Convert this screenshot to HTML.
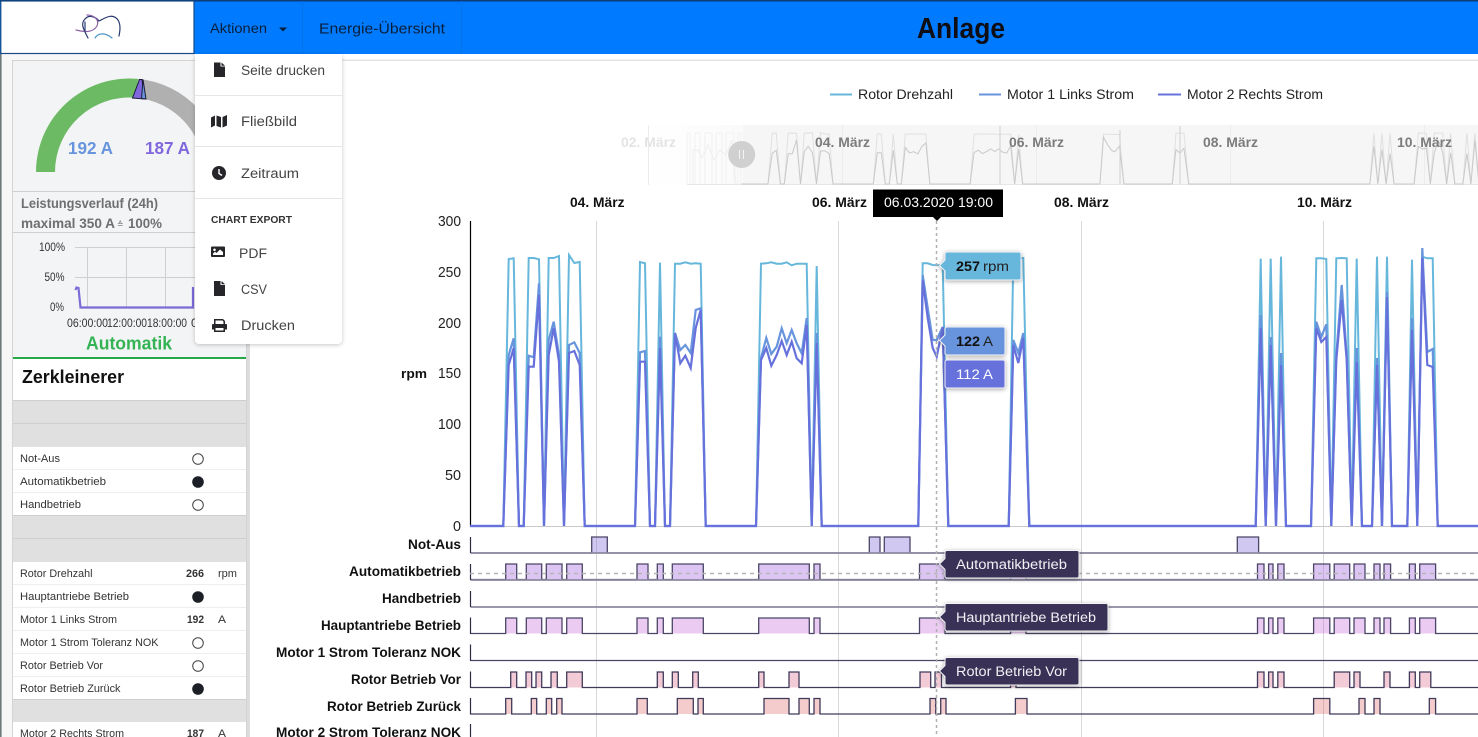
<!DOCTYPE html>
<html lang="de">
<head>
<meta charset="utf-8">
<title>Anlage</title>
<style>
html,body{margin:0;padding:0;width:1478px;height:737px;overflow:hidden;background:#fff}
svg{display:block;position:absolute;left:0;top:0}
text{font-family:"Liberation Sans",sans-serif;white-space:pre}
.s{font-size:11px;fill:#333}
.b{font-weight:bold}
.l{font-size:13.5px;font-weight:bold;fill:#111}
.y{font-size:15px;fill:#222}
.m{font-size:13.5px;fill:#444}
.t{font-size:13.5px;fill:#f2f2f6}
</style>
</head>
<body>
<svg width="1478" height="737" viewBox="0 0 1478 737" xmlns="http://www.w3.org/2000/svg">
<defs>
<path id="r" fill="none" vector-effect="non-scaling-stroke" d="M470 526H503.3L508.7 259 513.7 258.3 519 526H523.7L528.7 258 533.7 258 539 259.3 544 526 548.7 258 553.7 258 559 256 564 526 569 255 574.3 263 579.7 262 584.7 526H635L640 262 645 263.3 650 526H655L660 262.7 665 526H670L675 263.7 680.3 263.7 685.3 262.3 690.7 263.7 695.7 263.3 700.7 263.7 705.7 526H756L761 263.7 766.3 263.3 771.3 262.3 776.7 263.7 781.7 263.7 786.7 262.3 791.7 265.3 796.7 263.7 801.7 263.7 806.7 263.7 811.7 526 816.7 266 821.7 526H918.3L922.7 263.3 927.7 263.3 932.7 265 936.7 265.3 942.7 265 948.3 526H1008.7L1013.3 258 1018.3 258 1023.3 258 1029.3 526H1255.7L1260.7 258.7 1265.7 526 1270.7 258.7 1276 526 1281 256.7 1286 526H1311L1316.3 258.3 1321.3 258.3 1326.3 259 1331.3 526 1336.3 258.3 1341.7 258 1346.7 258.3 1351.7 526 1356.7 258.7 1362 526H1372L1377 256.7 1382 526 1387 256.7 1392 526H1407.3L1412 259.7 1417.3 526 1422.3 256.7 1427.3 258.3 1432.7 258.3 1437.7 526H1478"/>
<path id="a" fill="none" vector-effect="non-scaling-stroke" d="M470 526H503.3L508.7 355 513.7 338.3 519 526H523.7L528.7 355.7 533.7 357.3 539 283.3 544 526 548.7 340 553.7 321.7 559 355 564 526 569 345 574.3 342.3 579.7 353 584.7 526H635L640 352.3 645 351 650 526H655L660 336.7 665 526H670L675 333 680.3 350 685.3 345 690.7 353 695.7 310 700.7 308.3 705.7 526H756L761 358 766.3 338 771.3 354 776.7 346.7 781.7 328.3 786.7 343.3 791.7 330 796.7 343.3 801.7 353.3 806.7 318 811.7 526 816.7 333 821.7 526H918.3L922.7 275 927.7 308 932.7 340 936.7 340 942.7 327 948.3 526H1008.7L1013.3 340 1018.3 353 1023.3 333 1029.3 526H1255.7L1260.7 315 1265.7 526 1270.7 337 1276 526 1281 353 1286 526H1311L1316.3 321.7 1321.3 337 1326.3 324.3 1331.3 526 1336.3 355 1341.7 285 1346.7 355 1351.7 526 1356.7 348 1362 526H1372L1377 358 1382 526 1387 292 1392 526H1407.3L1412 318 1417.3 526 1422.3 248 1427.3 352 1432.7 349 1437.7 526H1478"/>
<path id="c" fill="none" vector-effect="non-scaling-stroke" d="M470 526H503.3L508.7 365 513.7 348 519 526H523.7L528.7 366.7 533.7 366.7 539 295 544 526 548.7 355 553.7 328 559 361.7 564 526 569 353 574.3 351 579.7 365 584.7 526H635L640 361.7 645 361.7 650 526H655L660 348 665 526H670L675 333 680.3 363.3 685.3 355.7 690.7 368 695.7 328 700.7 310 705.7 526H756L761 360 766.3 348 771.3 365.7 776.7 355 781.7 341 786.7 355 791.7 341.7 796.7 358.3 801.7 363.3 806.7 325 811.7 526 816.7 343 821.7 526H918.3L922.7 280 927.7 318 932.7 348 936.7 356.7 942.7 327 948.3 526H1008.7L1013.3 345 1018.3 363 1023.3 338 1029.3 526H1255.7L1260.7 328 1265.7 526 1270.7 345 1276 526 1281 365 1286 526H1311L1316.3 328 1321.3 342 1326.3 337 1331.3 526 1336.3 360 1341.7 300 1346.7 360 1351.7 526 1356.7 362 1362 526H1372L1377 365 1382 526 1387 297 1392 526H1407.3L1412 330 1417.3 526 1422.3 258 1427.3 365 1432.7 367 1437.7 526H1478"/>
<clipPath id="mc"><rect x="648" y="125" width="830" height="60"/></clipPath>
<linearGradient id="fd" x1="0" y1="0" x2="1" y2="0"><stop offset="0" stop-color="#fff"/><stop offset="1" stop-color="#fafafa"/></linearGradient>
</defs>

<!-- page base -->
<rect x="0" y="54" width="1478" height="683" fill="#fff"/>
<rect x="250" y="59.5" width="1228" height="1.5" fill="#e4e4e4"/>

<!-- sidebar -->
<rect x="0" y="54" width="250" height="683" fill="#f7f7f7"/>
<rect x="0" y="54" width="1.6" height="683" fill="#6e7a7a"/>
<rect x="246" y="60" width="4" height="677" fill="#dcdcdc"/>
<rect x="12.5" y="60.5" width="234" height="676.5" fill="#f3f4f6" stroke="#d4d4d4"/>

<!-- gauge -->
<path d="M138 78.9A93.5 93.5 0 0 1 223 172H204A74.5 74.5 0 0 0 136.3 97.8Z" fill="#b0b0b0"/>
<path d="M36 172A93.5 93.5 0 0 1 138 78.9L136.3 97.8A74.5 74.5 0 0 0 55 172Z" fill="#6cba64"/>
<path d="M132.5 98 139.5 79.5 142 79.5 144.5 99Z" fill="#8067dc" stroke="#1c1c3a" stroke-width="1"/>
<path d="M141.5 98.5 143 79.5 146 99Z" fill="#6794dc" stroke="#1c1c3a" stroke-width="1"/>
<text x="68" y="154" font-size="17.5" font-weight="bold" fill="#6794dc" textLength="45" lengthAdjust="spacingAndGlyphs">192 A</text>
<text x="145" y="154" font-size="17.5" font-weight="bold" fill="#8067dc" textLength="45" lengthAdjust="spacingAndGlyphs">187 A</text>

<rect x="13" y="191" width="233" height="1" fill="#cfcfcf"/>
<text x="21" y="208" font-size="14" font-weight="bold" fill="#6f6f6f" textLength="137" lengthAdjust="spacingAndGlyphs">Leistungsverlauf (24h)</text>
<text x="21" y="228" font-size="14" font-weight="bold" fill="#6f6f6f" textLength="94" lengthAdjust="spacingAndGlyphs">maximal 350 A</text>
<text x="117" y="227" font-size="8" fill="#6f6f6f" textLength="6.500" lengthAdjust="spacingAndGlyphs">≙</text>
<text x="128" y="228" font-size="14" font-weight="bold" fill="#6f6f6f" textLength="34" lengthAdjust="spacingAndGlyphs">100%</text>
<rect x="13" y="232" width="233" height="1" fill="#cfcfcf"/>

<!-- small chart -->
<g stroke="#cfcfcf" stroke-width="1">
<path d="M75 247.5H195M75 277.5H195M87.5 247V307M126.5 247V307M165.5 247V307" fill="none"/>
</g>
<path d="M75.5 290 76.5 287.5 78.5 288 80.5 307.5H193V287" fill="none" stroke="#7a6bd6" stroke-width="2.2"/>
<g font-size="12" fill="#333">
<text x="39" y="251" textLength="26" lengthAdjust="spacingAndGlyphs">100%</text>
<text x="44.500" y="281" textLength="20" lengthAdjust="spacingAndGlyphs">50%</text>
<text x="50" y="311" textLength="14" lengthAdjust="spacingAndGlyphs">0%</text>
<text x="67" y="327" textLength="41" lengthAdjust="spacingAndGlyphs">06:00:00</text>
<text x="107" y="327" textLength="40" lengthAdjust="spacingAndGlyphs">12:00:00</text>
<text x="147" y="327" textLength="40" lengthAdjust="spacingAndGlyphs">18:00:00</text>
<text x="191" y="327">0</text>
</g>
<text x="86" y="349.500" font-size="18" font-weight="bold" fill="#34b354" textLength="86" lengthAdjust="spacingAndGlyphs">Automatik</text>
<rect x="13" y="357" width="233" height="2" fill="#28a745"/>

<!-- table panel -->
<rect x="13" y="359" width="233" height="378" fill="#fff"/>
<text x="22" y="383" font-size="18" font-weight="bold" fill="#111" textLength="102" lengthAdjust="spacingAndGlyphs">Zerkleinerer</text>
<g fill="#e0e0e0">
<rect x="13" y="400" width="233" height="47"/>
<rect x="13" y="515" width="233" height="47"/>
<rect x="13" y="699" width="233" height="23"/>
</g>
<path d="M13 400.500H246M13 423.500H246M13 515.500H246M13 538.500H246M13 699.500H246" stroke="#cfcfcf" fill="none"/>
<path d="M13 469.500H246M13 492.500H246M13 584.500H246M13 607.500H246M13 630.500H246M13 653.500H246M13 676.500H246" stroke="#eeeeee" fill="none"/>

<text class="s" x="20" y="462" textLength="40" lengthAdjust="spacingAndGlyphs">Not-Aus</text>
<text class="s" x="20" y="485" textLength="86" lengthAdjust="spacingAndGlyphs">Automatikbetrieb</text>
<text class="s" x="20" y="508" textLength="61" lengthAdjust="spacingAndGlyphs">Handbetrieb</text>
<text class="s" x="20" y="577" textLength="72.500" lengthAdjust="spacingAndGlyphs">Rotor Drehzahl</text>
<text class="s" x="20" y="600" textLength="109" lengthAdjust="spacingAndGlyphs">Hauptantriebe Betrieb</text>
<text class="s" x="20" y="623" textLength="97" lengthAdjust="spacingAndGlyphs">Motor 1 Links Strom</text>
<text class="s" x="20" y="646" textLength="138.500" lengthAdjust="spacingAndGlyphs">Motor 1 Strom Toleranz NOK</text>
<text class="s" x="20" y="669" textLength="83" lengthAdjust="spacingAndGlyphs">Rotor Betrieb Vor</text>
<text class="s" x="20" y="692" textLength="100.500" lengthAdjust="spacingAndGlyphs">Rotor Betrieb Zurück</text>
<text class="s" x="20" y="737" textLength="104" lengthAdjust="spacingAndGlyphs">Motor 2 Rechts Strom</text>

<text class="s b" x="186" y="577" textLength="18" lengthAdjust="spacingAndGlyphs">266</text>
<text class="s" x="218" y="577" textLength="19" lengthAdjust="spacingAndGlyphs">rpm</text>
<text class="s b" x="187" y="623" textLength="17" lengthAdjust="spacingAndGlyphs">192</text>
<text class="s" x="218" y="623" textLength="8" lengthAdjust="spacingAndGlyphs">A</text>
<text class="s b" x="187" y="737" textLength="17" lengthAdjust="spacingAndGlyphs">187</text>
<text class="s" x="218" y="737" textLength="8" lengthAdjust="spacingAndGlyphs">A</text>

<g fill="#fff" stroke="#444" stroke-width="1">
<circle cx="198" cy="459" r="5.300"/>
<circle cx="198" cy="505" r="5.300"/>
<circle cx="198" cy="643" r="5.300"/>
<circle cx="198" cy="666" r="5.300"/>
</g>
<g fill="#1c1f26">
<circle cx="198" cy="482" r="5.800"/>
<circle cx="198" cy="597" r="5.800"/>
<circle cx="198" cy="689" r="5.800"/>
</g>

<!-- legend -->
<g stroke-width="2" fill="none">
<path d="M830 94.500H852" stroke="#67b7dc"/>
<path d="M979 94.500H1001" stroke="#6794dc"/>
<path d="M1158 94.500H1181" stroke="#6771dc"/>
</g>
<g font-size="14" fill="#222">
<text x="858" y="99" textLength="95" lengthAdjust="spacingAndGlyphs">Rotor Drehzahl</text>
<text x="1007" y="99" textLength="127" lengthAdjust="spacingAndGlyphs">Motor 1 Links Strom</text>
<text x="1187" y="99" textLength="136" lengthAdjust="spacingAndGlyphs">Motor 2 Rechts Strom</text>
</g>

<!-- scrollbar / mini chart -->
<rect x="648" y="125" width="95" height="60" fill="url(#fd)"/>
<rect x="743" y="125" width="735" height="60" fill="#f6f6f6"/>
<path d="M648.500 125V185M842.500 125V185M1036.500 125V185M1230.500 125V185M1424.500 125V185" stroke="#ececec" fill="none"/>
<path d="M687 184.500H1478" stroke="#e6e6e6" fill="none"/>
<g clip-path="url(#mc)">
<path d="M687 184V133H690V184M695 184V133H700V184M705 184V133H712V184M716 184V133H722V184M726 184V133H734V184M738 184V133H741V184" fill="none" stroke="#f1f1f1"/>
<path d="M693 184V150H698L702 158 708 145 714 160 720 150 726 155 732 140 736 184" fill="none" stroke="#eeeeee"/>
<g transform="matrix(.8 0 0 .19 365.300 84.060)">
<use href="#r" stroke="#e0e0e0" stroke-width="1"/>
<use href="#c" stroke="#c9c9c9" stroke-width="1"/>
</g>
<path d="M1000 184V126M1120 184V130M1180 184V126" stroke="#d0d0d0" fill="none"/>
</g>
<text x="621" y="147" font-size="13.500" font-weight="bold" fill="#e4e4e4" textLength="55" lengthAdjust="spacingAndGlyphs">02. März</text>
<g font-size="13.500" font-weight="bold" fill="#7c7c7c">
<text x="815" y="147" textLength="55" lengthAdjust="spacingAndGlyphs">04. März</text>
<text x="1009" y="147" textLength="55" lengthAdjust="spacingAndGlyphs">06. März</text>
<text x="1203" y="147" textLength="55" lengthAdjust="spacingAndGlyphs">08. März</text>
<text x="1397" y="147" textLength="55" lengthAdjust="spacingAndGlyphs">10. März</text>
</g>
<circle cx="741.700" cy="154.500" r="13.500" fill="#d0d0d0"/>
<path d="M739.500 150V159M743.500 150V159" stroke="#f4f4f4" stroke-width="1" fill="none"/>

<!-- date labels -->
<g class="l">
<text class="l" x="570" y="207" textLength="54.500" lengthAdjust="spacingAndGlyphs">04. März</text>
<text class="l" x="812" y="207" textLength="55" lengthAdjust="spacingAndGlyphs">06. März</text>
<text class="l" x="1054" y="207" textLength="55" lengthAdjust="spacingAndGlyphs">08. März</text>
<text class="l" x="1297" y="207" textLength="55" lengthAdjust="spacingAndGlyphs">10. März</text>
</g>

<!-- grid -->
<path d="M596.500 221V737M838.500 221V737M1081.500 221V737M1323.500 221V737" stroke="#d8d8d8" fill="none"/>
<path d="M470 526.500H1478" stroke="#c9c9c9" fill="none"/>
<path d="M470.500 221V527" stroke="#000" stroke-width="1.200" fill="none"/>

<!-- y axis -->
<text class="y" x="438" y="226" textLength="23" lengthAdjust="spacingAndGlyphs">300</text>
<text class="y" x="438" y="277" textLength="23" lengthAdjust="spacingAndGlyphs">250</text>
<text class="y" x="438" y="328" textLength="23" lengthAdjust="spacingAndGlyphs">200</text>
<text class="y" x="438" y="378" textLength="23" lengthAdjust="spacingAndGlyphs">150</text>
<text class="y" x="438" y="429" textLength="23" lengthAdjust="spacingAndGlyphs">100</text>
<text class="y" x="445" y="480" textLength="16" lengthAdjust="spacingAndGlyphs">50</text>
<text class="y" x="453" y="531" textLength="8" lengthAdjust="spacingAndGlyphs">0</text>
<text x="401" y="378" font-size="13" font-weight="bold" fill="#111" textLength="26" lengthAdjust="spacingAndGlyphs">rpm</text>

<!-- row labels -->
<text class="l" x="408" y="549" textLength="53" lengthAdjust="spacingAndGlyphs">Not-Aus</text>
<text class="l" x="349" y="576" textLength="112" lengthAdjust="spacingAndGlyphs">Automatikbetrieb</text>
<text class="l" x="382" y="603" textLength="79" lengthAdjust="spacingAndGlyphs">Handbetrieb</text>
<text class="l" x="321" y="630" textLength="140" lengthAdjust="spacingAndGlyphs">Hauptantriebe Betrieb</text>
<text class="l" x="276" y="657" textLength="185" lengthAdjust="spacingAndGlyphs">Motor 1 Strom Toleranz NOK</text>
<text class="l" x="351" y="684" textLength="110" lengthAdjust="spacingAndGlyphs">Rotor Betrieb Vor</text>
<text class="l" x="327" y="711" textLength="134" lengthAdjust="spacingAndGlyphs">Rotor Betrieb Zurück</text>
<text class="l" x="276" y="737" textLength="185" lengthAdjust="spacingAndGlyphs">Motor 2 Strom Toleranz NOK</text>

<!-- main lines -->
<use href="#r" stroke="#67b7dc" stroke-width="2"/>
<use href="#a" stroke="#6794dc" stroke-width="2.200"/>
<use href="#c" stroke="#6771dc" stroke-width="2.200"/>

<!-- step rows -->
<g stroke-width="1.300" stroke-linejoin="miter">
<path stroke="#4b4567" fill="#8067dc" fill-opacity=".36" d="M470.500 553H591.700v-16H607.300v16H869.300v-16H880v16H884.300v-16H910v16H1237.300v-16H1258.600v16H1478"/>
<path stroke="#4b4567" fill="#a367dc" fill-opacity=".38" d="M470.500 579.500H505.700v-15.500H516.700v15.500H526.300v-15.500H541.700v15.500H546.300v-15.500H562v15.500H566.700v-15.500H582.300v15.500H637v-15.500H648v15.500H657.300v-15.500H663.300v15.500H672.300v-15.500H703.300v15.500H758.700v-15.500H809.300v15.500H814v-15.500H820v15.500H919.500v-15.500H945v15.500H1010.600v-15.500H1026v15.500H1257.500v-15.500H1264v15.500H1268.600v-15.500H1273v15.500H1277.800v-15.500H1284v15.500H1313.600v-15.500H1329.800v15.500H1334.200v-15.500H1349.700v15.500H1354v-15.500H1365v15.500H1374v-15.500H1380v15.500H1384v-15.500H1390.600v15.500H1409.400v-15.500H1415.300v15.500H1419.700v-15.500H1435.600v15.500H1478"/>
<path stroke="#4b4567" fill="#c767dc" fill-opacity=".34" d="M470.500 633.500H505.700v-15.500H516.700v15.500H526.300v-15.500H541.700v15.500H546.300v-15.500H562v15.500H566.700v-15.500H582.300v15.500H637v-15.500H648v15.500H657.300v-15.500H663.300v15.500H672.300v-15.500H703.300v15.500H758.700v-15.500H809.300v15.500H814v-15.500H820v15.500H919.500v-15.500H945v15.500H1010.600v-15.500H1026v15.500H1257.500v-15.500H1264v15.500H1268.600v-15.500H1273v15.500H1277.800v-15.500H1284v15.500H1313.600v-15.500H1329.800v15.500H1334.200v-15.500H1349.700v15.500H1354v-15.500H1365v15.500H1374v-15.500H1380v15.500H1384v-15.500H1390.600v15.500H1409.400v-15.500H1415.300v15.500H1419.700v-15.500H1435.600v15.500H1478"/>
<path stroke="#3f3a5a" fill="#dc6788" fill-opacity=".34" d="M470.500 687.500H510.700v-15.500H516.700v15.500H526v-15.500H531.700v15.500H536v-15.500H541.700v15.500H551v-15.500H557.300v15.500H566.700v-15.500H582.300v15.500H657.300v-15.500H663.300v15.500H672.300v-15.500H678.300v15.500H692.700v-15.500H698.300v15.500H758.700v-15.500H764v15.500H789v-15.500H799v15.500H920v-15.500H930.700v15.500H935v-15.500H941.500v15.500H1010.600v-15.500H1016v15.500H1257.500v-15.500H1264v15.500H1268.600v-15.500H1273v15.500H1277.800v-15.500H1284v15.500H1334.200v-15.500H1349.700v15.500H1354v-15.500H1360v15.500H1384v-15.500H1390v15.500H1409.400v-15.500H1415.300v15.500H1419.700v-15.500H1430.800v15.500H1478"/>
<path stroke="#3f3a5a" fill="#dc6967" fill-opacity=".34" d="M470.500 714H505.700v-15.500H511.700v15.500H531.300v-15.500H536.700v15.500H546.300v-15.500H551.700v15.500H556.700v-15.500H562v15.500H637v-15.500H647.300v15.500H677.300v-15.500H693.300v15.500H698v-15.500H703.300v15.500H764v-15.500H789v15.500H799v-15.500H809.300v15.500H814v-15.500H820v15.500H930v-15.500H935.700v15.500H940.700v-15.500H946v15.500H1015.400v-15.500H1027v15.500H1313.600v-15.500H1329.800v15.500H1359v-15.500H1365v15.500H1374v-15.500H1380v15.500H1429.300v-15.500H1435.600v15.500H1478"/>
<path stroke="#8c899f" fill="none" stroke-width="1.800" d="M470.500 553H1478M470.500 580H1478M470.500 607H1478"/>
<path stroke="#4b4567" fill="none" d="M470.500 660.500H1478"/>
<path stroke="#2c2c44" fill="none" stroke-width="1.200" d="M470.500 537V553M470.500 564V580M470.500 591V607M470.500 617.500V634M470.500 644.500V661M470.500 671.500V688M470.500 698V714.500M470.500 724V737"/>
</g>

<!-- cursor -->
<path d="M936.500 221V737" stroke="#b0b0b0" stroke-width="1.500" stroke-dasharray="3 3" fill="none"/>
<path d="M470 573.500H1478" stroke="#b5b5b5" stroke-width="1.500" stroke-dasharray="4 4" fill="none"/>

<!-- black date tooltip -->
<path d="M873 189.500H1003V217H941L937 221 933 217H873Z" fill="#000"/>
<text x="884" y="207" font-size="13.500" fill="#fff" textLength="109" lengthAdjust="spacingAndGlyphs">06.03.2020 19:00</text>

<!-- coloured value tooltips -->
<g stroke="#f4f4f8" stroke-width="1" style="filter:drop-shadow(0 1px 2px rgba(0,0,0,.35))">
<path fill="#67b7dc" d="M947 252H1019a2 2 0 0 1 2 2V278a2 2 0 0 1-2 2H947a2 2 0 0 1-2-2V271L939.500 265.500 945 260V254a2 2 0 0 1 2-2Z"/>
<path fill="#6794dc" d="M947 327H1003a2 2 0 0 1 2 2V353a2 2 0 0 1-2 2H947a2 2 0 0 1-2-2V346L939.500 340.500 945 335V329a2 2 0 0 1 2-2Z"/>
<path fill="#6771dc" d="M947 360H1003a2 2 0 0 1 2 2V386a2 2 0 0 1-2 2H947a2 2 0 0 1-2-2V362a2 2 0 0 1 2-2Z"/>
<path fill="#3a3256" d="M947 550.500H1077a2 2 0 0 1 2 2V576a2 2 0 0 1-2 2H947a2 2 0 0 1-2-2V569.500L939.500 564 945 558.500V552.500a2 2 0 0 1 2-2Z"/>
<path fill="#3a3256" d="M947 603.500H1106a2 2 0 0 1 2 2V629a2 2 0 0 1-2 2H947a2 2 0 0 1-2-2V622.500L939.500 617 945 611.500V605.500a2 2 0 0 1 2-2Z"/>
<path fill="#3a3256" d="M947 657.500H1077a2 2 0 0 1 2 2V683a2 2 0 0 1-2 2H947a2 2 0 0 1-2-2V676.500L939.500 671 945 665.500V659.500a2 2 0 0 1 2-2Z"/>
</g>
<text x="956" y="271" font-size="14" font-weight="bold" fill="#111" textLength="24" lengthAdjust="spacingAndGlyphs">257</text>
<text x="983" y="271" font-size="14" fill="#222" textLength="26" lengthAdjust="spacingAndGlyphs">rpm</text>
<text x="956" y="346" font-size="14" font-weight="bold" fill="#111" textLength="24" lengthAdjust="spacingAndGlyphs">122</text>
<text x="983" y="346" font-size="14" fill="#222" textLength="10" lengthAdjust="spacingAndGlyphs">A</text>
<text x="956" y="379" font-size="14" fill="#fff" textLength="37" lengthAdjust="spacingAndGlyphs">112 A</text>
<text class="t" x="956" y="569" textLength="111" lengthAdjust="spacingAndGlyphs">Automatikbetrieb</text>
<text class="t" x="956" y="622" textLength="140" lengthAdjust="spacingAndGlyphs">Hauptantriebe Betrieb</text>
<text class="t" x="956" y="676" textLength="111" lengthAdjust="spacingAndGlyphs">Rotor Betrieb Vor</text>

<!-- top bar -->
<rect x="0" y="0" width="1478" height="54" fill="#007bff"/>
<rect x="0" y="0" width="1478" height="1.500" fill="#0d3a78"/>
<rect x="0.800" y="1" width="193.200" height="52.500" fill="#fff" stroke="#174a85" stroke-width="1.200"/>
<rect x="302" y="1" width="1" height="53" fill="#0672e8"/>
<rect x="461" y="1" width="1" height="53" fill="#0672e8"/>
<g fill="none" stroke-linecap="round" stroke-width="1.200">
<path d="M88 38C84 30 80 24 85 19 89 14 96 17 99 21 104 19 112 12 118 20 121 25 120 31 119 36" stroke="#27386f"/>
<path d="M76 30C84 32 93 33 97 26 100 19 93 15 87 15" stroke="#8d62a9"/>
<path d="M95 38C98 33 105 32 112 38" stroke="#4c94c4"/>
<path d="M85 22V32" stroke="#2c3d75"/>
</g>
<text x="210" y="33" font-size="14" fill="#0a1f3a" textLength="57" lengthAdjust="spacingAndGlyphs">Aktionen</text>
<path d="M279 27.500H287L283 31.500Z" fill="#0a1f3a"/>
<text x="319" y="33.500" font-size="15" fill="#0a1f3a" textLength="126" lengthAdjust="spacingAndGlyphs">Energie-Übersicht</text>
<text x="917" y="38" font-size="29" font-weight="bold" fill="#0e0e14" textLength="88" lengthAdjust="spacingAndGlyphs">Anlage</text>

<!-- dropdown -->
<g style="filter:drop-shadow(0 1px 2px rgba(0,0,0,.22))">
<path d="M195 54H342V340a4 4 0 0 1-4 4H199a4 4 0 0 1-4-4Z" fill="#fff"/>
</g>
<path d="M195 95.500H342M195 146.500H342M195 198.500H342" stroke="#e6e6e6" fill="none"/>
<g font-size="13.500" fill="#444">
<text x="241" y="75" textLength="84" lengthAdjust="spacingAndGlyphs">Seite drucken</text>
<text x="241" y="126" textLength="56" lengthAdjust="spacingAndGlyphs">Fließbild</text>
<text x="241" y="178" textLength="58" lengthAdjust="spacingAndGlyphs">Zeitraum</text>
<text x="239" y="258" textLength="28" lengthAdjust="spacingAndGlyphs">PDF</text>
<text x="241" y="294" textLength="26" lengthAdjust="spacingAndGlyphs">CSV</text>
<text x="241" y="330" textLength="54" lengthAdjust="spacingAndGlyphs">Drucken</text>
</g>
<text x="211" y="223" font-size="10.500" font-weight="bold" fill="#333" textLength="81" lengthAdjust="spacingAndGlyphs">CHART EXPORT</text>
<g fill="#26262a">
<path d="M214 62.500H220.500V66.500H225V77H214ZM221.500 62.500 225 65.800H221.500Z"/>
<path d="M211 117.500 215 115.500V125.500L211 127.500ZM216.500 115.500 221 117V127.500L216.500 126ZM222.500 117 227 115V125.500L222.500 127.500Z"/>
<circle cx="219" cy="173" r="7"/>
<path d="M214 281H220.500V285H225V296H214ZM221.500 281 225 284.300H221.500Z"/>
<path fill-rule="evenodd" d="M212 246.500H224a1 1 0 0 1 1 1V256a1 1 0 0 1-1 1H212a1 1 0 0 1-1-1V247.500a1 1 0 0 1 1-1ZM214.500 248.500a1.300 1.300 0 1 0 .01 0ZM213 255H223V252L220 249.500 216.500 253 215 251.800 213 253.500Z"/>
<path fill-rule="evenodd" d="M214 319H223L225 321V324H226a1 1 0 0 1 1 1V329.500H225V332H214V329.500H212V325a1 1 0 0 1 1-1H214ZM215.500 320.500V324H223.500V321.800L222.500 320.500ZM215.500 328V330.500H223.500V328Z"/>
</g>
<path d="M219 169V173.500L222 175.500" fill="none" stroke="#fff" stroke-width="1.400"/>
</svg>
</body>
</html>
